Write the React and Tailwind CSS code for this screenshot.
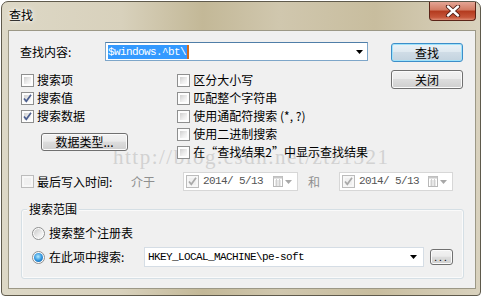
import React from "react";

const MONO = "font-['SimSun','Liberation_Mono',monospace] text-[11px] tracking-[-0.6px]";

function Check({ checked, disabled }) {
  return (
    <span
      className={`relative block w-[13px] h-[13px] shrink-0 border ${
        disabled ? "border-[#bcbcbc] bg-[#f7f7f7]" : "border-[#8e8f8f] bg-[#fdfdfd]"
      }`}
    >
      <span
        className={`absolute inset-[2px] ${
          disabled
            ? "bg-[#f0f0f0]"
            : "bg-[linear-gradient(135deg,#cfcfcf,#eeeeee_60%,#fbfbfb)]"
        }`}
      />
      {checked && (
        <svg className="absolute left-0 top-0" width="11" height="11" viewBox="0 0 11 11">
          <path
            d="M2 5.5 L4.3 8.3 L9 1.8"
            fill="none"
            stroke={disabled ? "#a9a9a9" : "#4c5f8f"}
            strokeWidth="1.7"
          />
        </svg>
      )}
    </span>
  );
}

function Radio({ checked }) {
  return (
    <span className="flex items-center justify-center w-[13px] h-[13px] shrink-0 rounded-full border border-[#8e8f8f] bg-[#fcfcfc]">
      <span
        className={`w-[9px] h-[9px] rounded-full ${
          checked
            ? "bg-[radial-gradient(circle_at_45%_40%,#b5ecff,#2a90dc_55%,#0b4a8a)]"
            : "bg-[linear-gradient(135deg,#c9c9c9,#f2f2f2_70%)]"
        }`}
      />
    </span>
  );
}

function Btn({ children, className = "", focused }) {
  return (
    <div
      className={`flex items-center justify-center rounded-[3px] border text-[12px] leading-none text-black ${
        focused
          ? "border-[#3c8ec9] shadow-[inset_0_0_0_1px_#9fe2fa] bg-[linear-gradient(#eaf2f7,#dfe9f0_45%,#cfdce6_50%,#c3d3df)]"
          : "border-[#707070] shadow-[inset_0_0_0_1px_#fbfbfb] bg-[linear-gradient(#f2f2f2,#ebebeb_45%,#dddddd_50%,#cfcfcf)]"
      } ${className}`}
    >
      {children}
    </div>
  );
}

function Arrow({ color = "#000" }) {
  return (
    <svg width="7" height="4" viewBox="0 0 7 4">
      <path d="M0 0 H7 L3.5 4 Z" fill={color} />
    </svg>
  );
}

function CheckRow({ label, checked }) {
  return (
    <div className="flex items-center h-[18px] gap-[3px]">
      <Check checked={checked} />
      <span className="whitespace-nowrap">{label}</span>
    </div>
  );
}

function DateBox({ className = "" }) {
  return (
    <div className={`flex items-center h-[19px] border border-[#d7d7d7] bg-white ${className}`}>
      <span className="ml-[2px]">
        <Check checked disabled />
      </span>
      <span className={`${MONO} ml-[4px] text-[#555]`}>2014/ 5/13</span>
      <svg className="ml-auto" width="10" height="11" viewBox="0 0 10 11">
        <rect x="0.5" y="0.5" width="9" height="10" fill="#fff" stroke="#b8b8b8" />
        <rect x="0.5" y="0.5" width="9" height="2" fill="#c8c8c8" />
        <path d="M2 5 H8 M2 7 H8 M2 9 H8 M3.5 3 V10 M6.5 3 V10" stroke="#d0d0d0" />
      </svg>
      <span className="ml-[2px] mr-[5px]">
        <Arrow color="#a8a8a8" />
      </span>
    </div>
  );
}

export default function App() {
  return (
    <div className="relative w-[485px] h-[299px] overflow-hidden bg-white font-['Noto_Sans_CJK_SC','Microsoft_YaHei',sans-serif] text-[12px] text-black">
      {/* window */}
      <div className="ml-[1px] mt-[1px] w-[480px] h-[295px] rounded-t-[7px] rounded-b-[4px] border border-[#5f5a4c] bg-[linear-gradient(90deg,#ddd8c6_0%,#d8d1bc_25%,#c3b897_42%,#d0c7ae_58%,#c8bd9e_78%,#d9d2be_100%)]">
        {/* title bar */}
        <div className="flex justify-between h-[28px]">
          <span className="pl-[7px] pt-[5px] text-[12px] leading-[16px] [text-shadow:0_0_6px_#fff,0_0_3px_#fff]">
            查找
          </span>
          <div className="mr-[4px] w-[47px] h-[19px] rounded-b-[4px] border border-t-0 border-[#5b2418] bg-[linear-gradient(#e4a595,#d27a62_45%,#b33a1e_50%,#c6563a_85%,#de8c74)] flex items-center justify-center">
            <svg width="16" height="12" viewBox="0 0 16 12">
              <path d="M3 1.5 L13 10.5 M13 1.5 L3 10.5" stroke="#4a1a12" strokeWidth="4.2" strokeLinecap="round" />
              <path d="M3 1.5 L13 10.5 M13 1.5 L3 10.5" stroke="#fff" strokeWidth="2.4" strokeLinecap="round" />
            </svg>
          </div>
        </div>

        {/* client area */}
        <div className="relative ml-[6px] w-[468px] h-[259px] border border-[#9c9886] bg-[#f0f0f0] pl-[11px] pt-[11px]">
          {/* watermark */}
          <div className="absolute left-[104px] top-[116px] whitespace-nowrap font-['Liberation_Serif',serif] text-[21px] leading-none text-[#d2d2d2] tracking-[1.5px] select-none">
            http://blog.csdn.net/ztz1321
          </div>

          <div className="relative flex">
            {/* left part */}
            <div className="w-[348px]">
              <div className="flex items-center h-[19px]">
                <span className="w-[85px]">查找内容:</span>
                <div className="flex items-center w-[263px] h-[19px] border border-[#7ea6c9] border-t-[#4f7ea8] bg-white pl-[2px]">
                  <span className={`${MONO} bg-[#3399ff] text-white leading-[14px] pr-[1px]`}>$windows.^bt\</span>
                  <span className="w-[2px] h-[14px] bg-[#d66a1a]" />
                  <span className="ml-auto mr-[4px]">
                    <Arrow />
                  </span>
                </div>
              </div>

              <div className="flex mt-[10px] ml-[1px]">
                <div className="w-[162px]">
                  <CheckRow label="搜索项" />
                  <CheckRow label="搜索值" checked />
                  <CheckRow label="搜索数据" checked />
                  <Btn className="mt-[8px] ml-[20px] w-[87px] h-[18px]">数据类型...</Btn>
                </div>
                <div>
                  <CheckRow label="区分大小写" />
                  <CheckRow label="匹配整个字符串" />
                  <CheckRow label="使用通配符搜索 (*, ?)" />
                  <CheckRow label="使用二进制搜索" />
                  <CheckRow label="在“查找结果2”中显示查找结果" />
                </div>
              </div>
            </div>

            {/* buttons */}
            <div className="ml-[23px] mt-[1px]">
              <Btn focused className="w-[72px] h-[19px]">查找</Btn>
              <Btn className="mt-[8px] w-[72px] h-[19px]">关闭</Btn>
            </div>
          </div>

          {/* last write time */}
          <div className="relative flex items-center h-[19px] mt-[11px] ml-[1px]">
            <div className="flex items-center gap-[3px] w-[110px]">
              <Check disabled />
              <span>最后写入时间:</span>
            </div>
            <span className="w-[52px] text-[#8f8f8f]">介于</span>
            <DateBox className="w-[115px]" />
            <span className="w-[41px] pl-[10px] text-[#8f8f8f]">和</span>
            <DateBox className="w-[114px]" />
          </div>

          {/* search scope group */}
          <div className="relative mt-[18px] ml-[1px] w-[443px] h-[70px] rounded-[3px] border border-[#d5dfe5] shadow-[inset_0_0_0_1px_#fafafa] pl-[10px] pt-[13px]">
            <span className="absolute left-[5px] -top-[9px] px-[2px] bg-[#f0f0f0] leading-[16px]">搜索范围</span>
            <div className="flex items-center h-[20px] gap-[4px]">
              <Radio />
              <span>搜索整个注册表</span>
            </div>
            <div className="flex items-center h-[20px] mt-[4px]">
              <div className="flex items-center gap-[4px] w-[112px]">
                <Radio checked />
                <span>在此项中搜索:</span>
              </div>
              <div className="flex items-center w-[280px] h-[20px] border border-[#d5dde5] bg-white pl-[3px]">
                <span className={`${MONO} text-black`}>HKEY_LOCAL_MACHINE\pe-soft</span>
                <span className="ml-auto mr-[6px]">
                  <Arrow />
                </span>
              </div>
              <Btn className="ml-[6px] w-[23px] h-[16px] items-end pb-[2px]">
                <span className="text-[10px] leading-none tracking-[2px]">...</span>
              </Btn>
            </div>
          </div>
        </div>
      </div>
    </div>
  );
}
